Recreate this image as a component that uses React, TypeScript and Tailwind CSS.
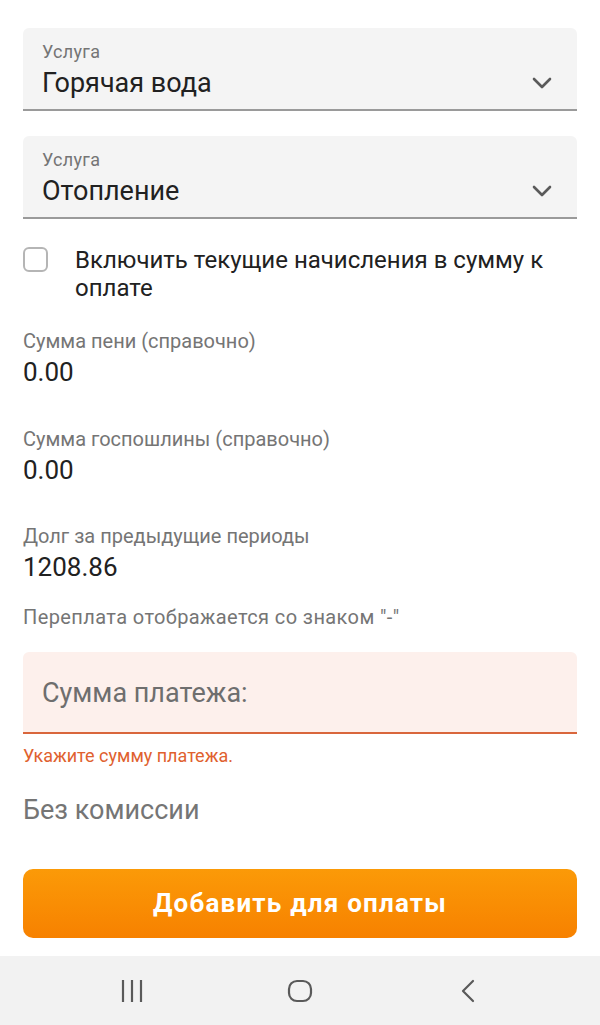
import React from 'react';

const font = { fontFamily: 'Roboto, "Noto Sans", sans-serif' };

function Chevron() {
  return (
    <svg width="20" height="12" viewBox="0 0 20 12" className="shrink-0 mt-[36px]">
      <polyline points="2,2 10,10 18,2" fill="none" stroke="#5a5a5a" strokeWidth="2.6" strokeLinecap="round" strokeLinejoin="round" />
    </svg>
  );
}

function ServiceSelect({ value, className = '' }: { value: string; className?: string }) {
  return (
    <div className={`h-[83px] bg-[#f4f4f4] rounded-t-[6px] border-b-[2px] border-[#9a9a9a] flex items-start pl-[19px] pr-[25px] pt-[13px] ${className}`}>
      <div className="flex-1">
        <div className="text-[18px] leading-[22px] tracking-[0.3px] text-[#757575]">Услуга</div>
        <div className="text-[27px] leading-[32px] text-[#212121] mt-[4px]">{value}</div>
      </div>
      <Chevron />
    </div>
  );
}

function InfoRow({ label, value, className = '' }: { label: string; value: string; className?: string }) {
  return (
    <div className={className}>
      <div className="text-[20px] leading-[24px] text-[#757575]">{label}</div>
      <div className="text-[26px] leading-[30px] text-[#212121] mt-[4px]">{value}</div>
    </div>
  );
}

export default function App() {
  return (
    <div className="w-[600px] h-[1025px] bg-white flex flex-col overflow-hidden" style={font}>
      <div className="flex-1 px-[23px] pt-[28px]">
        <ServiceSelect value="Горячая вода" />
        <ServiceSelect value="Отопление" className="mt-[25px]" />

        {/* checkbox */}
        <div className="flex items-start mt-[27px]">
          <div className="w-[25px] h-[25px] mt-[1px] rounded-[6px] border-[2px] border-[#b5b5b5] shrink-0" />
          <div className="ml-[27px] text-[24px] leading-[28px] text-[#212121]">
            Включить текущие начисления в сумму к оплате
          </div>
        </div>

        <InfoRow label="Сумма пени (справочно)" value="0.00" className="mt-[27px]" />
        <InfoRow label="Сумма госпошлины (справочно)" value="0.00" className="mt-[40px]" />
        <InfoRow label="Долг за предыдущие периоды" value="1208.86" className="mt-[39px]" />

        <div className="mt-[23px] text-[20px] leading-[24px] tracking-[0.4px] text-[#757575]">
          Переплата отображается со знаком "-"
        </div>

        {/* amount input */}
        <div className="mt-[23px] h-[82px] bg-[#fdf0ec] rounded-t-[6px] border-b-[2px] border-[#d9663c] flex items-start px-[19px] pt-[25px]">
          <span className="text-[27px] leading-[32px] text-[#6e6e6e]">Сумма платежа:</span>
        </div>
        <div className="mt-[11px] text-[18px] leading-[22px] text-[#e0612e]">Укажите сумму платежа.</div>

        <div className="mt-[27px] text-[27px] leading-[32px] text-[#757575]">Без комиссии</div>

        <button className="mt-[43px] w-full h-[69px] rounded-[10px] bg-gradient-to-b from-[#fb9a08] to-[#f78100] text-white text-[26px] font-bold tracking-[1.2px]">
          Добавить для оплаты
        </button>
      </div>

      {/* android nav bar */}
      <div className="h-[69px] bg-[#f2f2f2] flex items-center justify-center gap-[88px] shrink-0">
        <div className="w-[80px] flex justify-center">
          <svg width="24" height="24" viewBox="0 0 24 24">
            <line x1="3" y1="1" x2="3" y2="23" stroke="#5a5a5a" strokeWidth="2.2" />
            <line x1="12" y1="1" x2="12" y2="23" stroke="#5a5a5a" strokeWidth="2.2" />
            <line x1="21" y1="1" x2="21" y2="23" stroke="#5a5a5a" strokeWidth="2.2" />
          </svg>
        </div>
        <div className="w-[80px] flex justify-center">
          <svg width="26" height="24" viewBox="0 0 26 24">
            <rect x="2" y="2" width="22" height="20" rx="8" fill="none" stroke="#5a5a5a" strokeWidth="2.2" />
          </svg>
        </div>
        <div className="w-[80px] flex justify-center">
          <svg width="16" height="24" viewBox="0 0 16 24">
            <polyline points="13,2 3,12 13,22" fill="none" stroke="#5a5a5a" strokeWidth="2.2" strokeLinecap="round" strokeLinejoin="round" />
          </svg>
        </div>
      </div>
    </div>
  );
}
